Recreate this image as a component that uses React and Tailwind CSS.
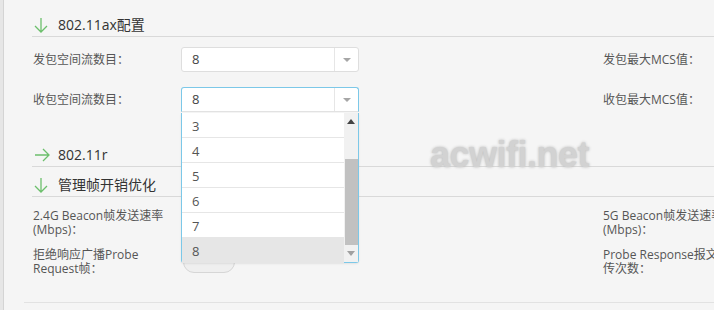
import React from "react";

const FONT = "font-['Open_Sans','Noto_Sans_CJK_SC',sans-serif]";

function ArrowDown() {
  return (
    <svg width="14" height="16" viewBox="0 0 14 16" className="shrink-0">
      <path d="M7 1 V15 M1 9 L7 15 L13 9" fill="none" stroke="#6cbf6c" strokeWidth="1.3" />
    </svg>
  );
}

function ArrowRight() {
  return (
    <svg width="16" height="14" viewBox="0 0 16 14" className="shrink-0">
      <path d="M1 7 H15 M9 1 L15 7 L9 13" fill="none" stroke="#6cbf6c" strokeWidth="1.3" />
    </svg>
  );
}

function SectionHead({ icon, title }) {
  return (
    <div className="h-[30px] flex items-end pb-px border-b border-[#d9d9d9]">
      <div className="w-[26px] h-[20px] pl-[2px] flex items-center">{icon}</div>
      <div className="text-[14px] leading-[20px] text-[#333]">{title}</div>
    </div>
  );
}

function Caret() {
  return (
    <svg width="10" height="6" viewBox="0 0 10 6">
      <path d="M1 1 H9 L5 5 Z" fill="#a6a6a6" />
    </svg>
  );
}

function Select({ value, active, children }) {
  return (
    <div className="relative w-[178px] h-[25px] shrink-0">
      <div
        className={
          active
            ? "h-full flex items-center bg-white rounded-t-[3px] border border-[#7cc8e8] border-b-[#e2e2e2]"
            : "h-full flex items-center bg-white rounded-[3px] border border-[#dedede]"
        }
      >
        <div className="flex-1 pl-[10px] text-[13px] text-[#444]">{value}</div>
        <div className="w-[24px] h-full border-l border-[#e6e6e6] flex items-center justify-center">
          <Caret />
        </div>
      </div>
      {children}
    </div>
  );
}

// width class passed in whole, so no two width utilities fight
function Label({ children, w = "w-[140px]", className = "" }) {
  return <div className={w + " shrink-0 text-[12px] leading-[14px] text-[#555] " + className}>{children}</div>;
}

function Dropdown() {
  const items = ["3", "4", "5", "6", "7", "8"];
  return (
    <div className="absolute z-10 top-[26px] left-0 w-[178px] h-[150px] flex bg-white border border-t-0 border-[#7cc8e8] rounded-b-[3px] shadow-[0_1px_2px_rgba(0,0,0,0.08)]">
      <div className="flex-1 flex flex-col">
        {items.map((n) => (
          <div
            key={n}
            className={
              "h-[25px] shrink-0 flex items-center pt-[4px] pl-[10px] text-[13px] text-[#555] border-b border-[#e6e6e6] " +
              (n === "8" ? "bg-[#e6e6e6]" : "")
            }
          >
            {n}
          </div>
        ))}
      </div>
      <div className="w-[14px] bg-[#f1f1f1] flex flex-col items-center">
        <div className="h-[16px] flex items-center justify-center">
          <svg width="8" height="5" viewBox="0 0 8 5">
            <path d="M0 5 L4 0 L8 5 Z" fill="#444" />
          </svg>
        </div>
        <div className="h-[30px]" />
        <div className="w-[13px] h-[86px] bg-[#c1c1c1]" />
        <div className="flex-1 flex items-center justify-center">
          <svg width="8" height="5" viewBox="0 0 8 5">
            <path d="M0 0 L8 0 L4 5 Z" fill="#a0a0a0" />
          </svg>
        </div>
      </div>
    </div>
  );
}

export default function App() {
  return (
    <div className={"relative w-[714px] h-[310px] overflow-hidden flex bg-[#f5f5f5] " + FONT}>
      <div className="w-[4px] shrink-0 bg-[#e6e6e6] border-r border-[#d4d4d4]" />
      <div className="flex-1 min-w-0 flex flex-col">
        <div className="pl-[28px] pt-[7px] flex flex-col">
          <SectionHead icon={<ArrowDown />} title="802.11ax配置" />

          <div className="flex items-center mt-[10px]">
            <Label w="w-[149px]" className="pl-px">发包空间流数目：</Label>
            <Select value="8" />
            <Label className="ml-[244px]">发包最大MCS值：</Label>
          </div>

          <div className="flex items-center mt-[15px]">
            <Label w="w-[149px]" className="pl-px">收包空间流数目：</Label>
            <Select value="8" active>
              <Dropdown />
            </Select>
            <Label className="ml-[244px]">收包最大MCS值：</Label>
          </div>

          <div className="mt-[25px]">
            <SectionHead icon={<ArrowRight />} title="802.11r" />
          </div>
          <SectionHead icon={<ArrowDown />} title="管理帧开销优化" />

          <div className="flex items-start mt-[12px]">
            <div className="w-[149px] shrink-0 pl-px">
              <Label>2.4G Beacon帧发送速率(Mbps)：</Label>
            </div>
            <div className="w-[178px] shrink-0" />
            <Label w="w-[132px]" className="ml-[244px]">5G Beacon帧发送速率(Mbps)：</Label>
          </div>

          <div className="flex items-center mt-[11px]">
            <div className="w-[149px] shrink-0 pl-px">
              <Label>拒绝响应广播Probe Request帧：</Label>
            </div>
            <div className="w-[178px] shrink-0 pl-[2px]">
              <div className="w-[52px] h-[22px] rounded-full border border-[#d6d6d6] bg-[#efefef]" />
            </div>
            <Label w="w-[136px]" className="ml-[244px]">Probe Response报文重传次数：</Label>
          </div>
        </div>

        <div className="mt-auto mb-[7px] ml-[20px] border-b border-[#e2e2e2]" />
      </div>

      <div className="absolute left-[430px] top-[128px] text-[36px] font-bold font-['Liberation_Sans',sans-serif] text-[#d2d2d2] [text-shadow:0_0_3px_#b5b5b5] tracking-[-0.5px]">
        acwifi.net
      </div>
    </div>
  );
}
